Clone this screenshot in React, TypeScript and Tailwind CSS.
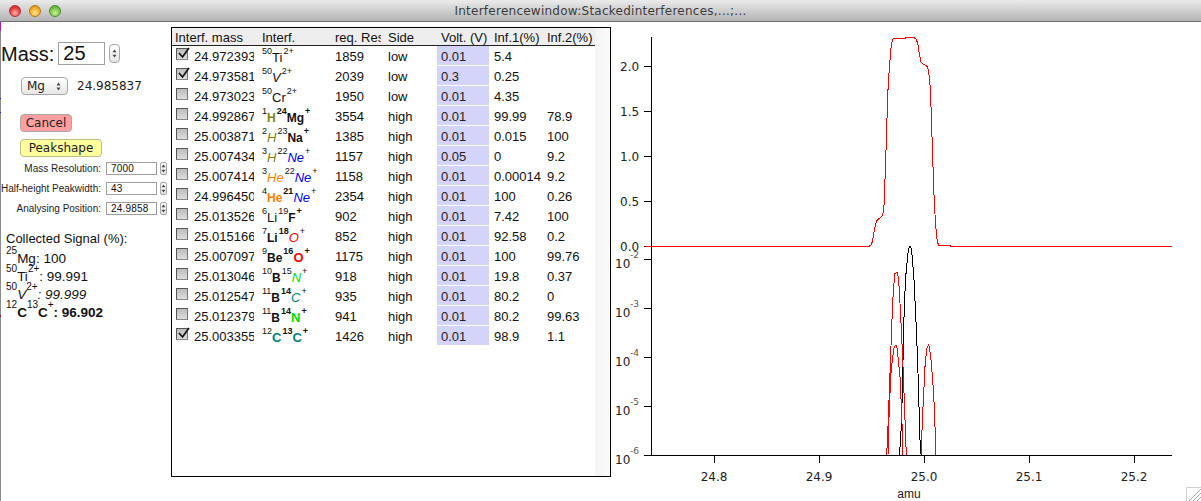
import type { ReactNode } from "react";

type Part = { m: string; e: string; mb?: boolean; cls?: string };
type Row = {
  on?: boolean;
  mass: string;
  parts: Part[];
  charge: string;
  cb?: boolean;
  res: string;
  side: string;
  volt: string;
  inf1: string;
  inf2?: string;
};

const OLIVE_B = "font-bold text-[#7f7f10]";
const OLIVE_I = "italic text-[13px] text-[#7f7f10]";
const ORANGE_I = "italic text-[13px] text-[#ff8000]";
const ORANGE_B = "font-bold text-[#ff8000]";
const BLUE_I = "italic text-[13px] text-[#0000ff]";
const RED_I = "italic text-[13px] text-[#ff0000]";
const RED_B = "font-bold text-[13px] text-[#ff0000]";
const GREEN_I = "italic text-[13px] text-[#00e000]";
const GREEN_B = "font-bold text-[13px] text-[#00e000]";
const TEAL_I = "italic text-[13px] text-[#008080]";
const TEAL_B = "font-bold text-[13px] text-[#008080]";
const PLAIN = "text-[13px]";

const rows: Row[] = [
  { on: true, mass: "24.972393", parts: [{ m: "50", e: "Ti", cls: PLAIN }], charge: "2+", res: "1859", side: "low", volt: "0.01", inf1: "5.4" },
  { on: true, mass: "24.973581", parts: [{ m: "50", e: "V", cls: "italic text-[13px]" }], charge: "2+", res: "2039", side: "low", volt: "0.3", inf1: "0.25" },
  { mass: "24.973023", parts: [{ m: "50", e: "Cr", cls: PLAIN }], charge: "2+", res: "1950", side: "low", volt: "0.01", inf1: "4.35" },
  { mass: "24.992867", parts: [{ m: "1", e: "H", cls: OLIVE_B }, { m: "24", mb: true, e: "Mg", cls: "font-bold" }], charge: "+", cb: true, res: "3554", side: "high", volt: "0.01", inf1: "99.99", inf2: "78.9" },
  { mass: "25.003871", parts: [{ m: "2", e: "H", cls: OLIVE_I }, { m: "23", e: "Na", cls: "font-bold" }], charge: "+", cb: true, res: "1385", side: "high", volt: "0.01", inf1: "0.015", inf2: "100" },
  { mass: "25.007434", parts: [{ m: "3", e: "H", cls: OLIVE_I }, { m: "22", e: "Ne", cls: BLUE_I }], charge: "+", res: "1157", side: "high", volt: "0.05", inf1: "0", inf2: "9.2" },
  { mass: "25.007414", parts: [{ m: "3", e: "He", cls: ORANGE_I }, { m: "22", e: "Ne", cls: BLUE_I }], charge: "+", res: "1158", side: "high", volt: "0.01", inf1: "0.00014", inf2: "9.2" },
  { mass: "24.996450", parts: [{ m: "4", e: "He", cls: ORANGE_B }, { m: "21", mb: true, e: "Ne", cls: BLUE_I }], charge: "+", res: "2354", side: "high", volt: "0.01", inf1: "100", inf2: "0.26" },
  { mass: "25.013526", parts: [{ m: "6", e: "Li", cls: PLAIN }, { m: "19", e: "F", cls: "font-bold" }], charge: "+", cb: true, res: "902", side: "high", volt: "0.01", inf1: "7.42", inf2: "100" },
  { mass: "25.015166", parts: [{ m: "7", e: "Li", cls: "font-bold" }, { m: "18", mb: true, e: "O", cls: RED_I }], charge: "+", res: "852", side: "high", volt: "0.01", inf1: "92.58", inf2: "0.2" },
  { mass: "25.007097", parts: [{ m: "9", e: "Be", cls: "font-bold" }, { m: "16", mb: true, e: "O", cls: RED_B }], charge: "+", cb: true, res: "1175", side: "high", volt: "0.01", inf1: "100", inf2: "99.76" },
  { mass: "25.013046", parts: [{ m: "10", e: "B", cls: "font-bold" }, { m: "15", e: "N", cls: GREEN_I }], charge: "+", res: "918", side: "high", volt: "0.01", inf1: "19.8", inf2: "0.37" },
  { mass: "25.012547", parts: [{ m: "11", e: "B", cls: "font-bold" }, { m: "14", mb: true, e: "C", cls: TEAL_I }], charge: "+", res: "935", side: "high", volt: "0.01", inf1: "80.2", inf2: "0" },
  { mass: "25.012379", parts: [{ m: "11", e: "B", cls: "font-bold" }, { m: "14", mb: true, e: "N", cls: GREEN_B }], charge: "+", cb: true, res: "941", side: "high", volt: "0.01", inf1: "80.2", inf2: "99.63" },
  { on: true, mass: "25.003355", parts: [{ m: "12", e: "C", cls: TEAL_B }, { m: "13", mb: true, e: "C", cls: TEAL_B }], charge: "+", cb: true, res: "1426", side: "high", volt: "0.01", inf1: "98.9", inf2: "1.1" },
];

const Stepper = ({ big }: { big?: boolean }) => (
  <div
    className={
      big
        ? "w-[11px] h-[19px] rounded-[4px] border border-[#a8a8a8] bg-linear-to-b from-white to-[#e4e4e4] flex items-center justify-center"
        : "w-[7px] h-[13px] rounded-[2px] border border-[#a8a8a8] bg-linear-to-b from-white to-[#e4e4e4] flex items-center justify-center"
    }
  >
    <svg width="5" height="11" viewBox="0 0 5 11" fill="#444">
      <path d="M2.5 1.5 L4.5 4.2 H0.5 Z" />
      <path d="M2.5 9.5 L4.5 6.8 H0.5 Z" />
    </svg>
  </div>
);

const NumField = ({ label, value }: { label: string; value: string }) => (
  <div className="h-[20px] flex items-center">
    <div className="w-[101px] text-right text-[10px] text-[#222]">{label}</div>
    <div className="ml-[5px] w-[51px] h-[13px] border border-[#a0a0a0] pl-[4px] text-[10px] leading-[11px] tracking-[0.2px] text-[#111]">
      {value}
    </div>
    <div className="ml-[3px]">
      <Stepper />
    </div>
  </div>
);

const Check = ({ on }: { on?: boolean }) => (
  <div className="relative w-[12px] h-[12px] border border-[#555] border-b-[#888] border-r-[#777] bg-linear-to-b from-[#bcbcbc] to-[#dedede]">
    {on && (
      <svg className="absolute -top-[3px] left-0" width="14" height="14" viewBox="0 0 14 14" fill="none">
        <path d="M2 7 L5.5 11 L12 2" stroke="#111" strokeWidth="1.7" />
      </svg>
    )}
  </div>
);

const Formula = ({ row }: { row: Row }) => (
  <div className="flex items-start h-[19px] overflow-visible text-[#111]">
    {row.parts.map((p, idx) => (
      <div key={idx} className={idx > 0 ? "flex items-start ml-[1px]" : "flex items-start"}>
        <span className={p.mb ? "text-[9px] leading-[10px] font-bold" : "text-[9px] leading-[10px]"}>{p.m}</span>
        <span className={"text-[12px] leading-[12px] mt-[6px] " + (p.cls || "")}>{p.e}</span>
      </div>
    ))}
    <span className={row.cb ? "text-[9px] leading-[10px] ml-[1px] font-bold" : "text-[9px] leading-[10px] ml-[1px]"}>{row.charge}</span>
  </div>
);

const SignalLine = ({ children }: { children: ReactNode }) => (
  <div className="flex items-start h-[18px] text-[13px] leading-[15px] text-[#111]">{children}</div>
);

const M = ({ v }: { v: string }) => <span className="text-[10px] leading-[9px] font-normal not-italic -mt-[2px]">{v}</span>;

const Sig = ({ children, cls }: { children: ReactNode; cls?: string }) => (
  <span className={"text-[13.5px] leading-[15px] mt-[3px] whitespace-pre " + (cls || "")}>{children}</span>
);

// points read off the reference, in 3x crop pixels
const toPoints = (pts: number[][], ox: number, oy: number) =>
  pts.map(([x, y]) => `${(ox + x / 3).toFixed(1)},${(oy + y / 3).toFixed(1)}`).join(" ");

const topCurve = [
  [-642, 649], [28, 649], [33, 645], [37, 635], [41, 612], [45, 590], [50, 572], [58, 565], [65, 560], [69, 550],
  [72, 525], [74, 485], [76, 415], [79, 335], [82, 235], [85, 155], [90, 90], [94, 45], [98, 27], [104, 25],
  [135, 25], [140, 22], [160, 22], [168, 27], [173, 40], [178, 70], [183, 95], [190, 103], [200, 107], [205, 120],
  [208, 140], [211, 175], [213, 230], [216, 320], [219, 410], [222, 495], [226, 570], [229, 610], [232, 635],
  [236, 646], [270, 647], [274, 650], [936, 650],
];
const blackPeak = [
  [118, 645], [122, 600], [125, 520], [128, 420], [130, 310], [133, 200], [137, 110], [141, 70], [145, 30], [148, 20],
  [152, 20], [155, 35], [158, 70], [162, 120], [166, 200], [170, 290], [174, 400], [178, 530], [181, 630], [184, 645],
];
const redA = [
  [80, 645], [85, 540], [90, 400], [95, 260], [100, 150], [105, 100], [112, 97], [116, 120], [120, 190], [125, 290],
  [130, 400], [135, 540], [139, 645],
];
const redB = [
  [84, 645], [88, 500], [93, 400], [98, 350], [103, 320], [110, 315], [114, 350], [120, 410], [125, 520], [129, 645],
];
const redC = [
  [183, 645], [188, 520], [195, 380], [200, 325], [206, 313], [212, 350], [218, 420], [224, 520], [227, 645],
];

const Chart = () => {
  const sans = { fontFamily: "'DejaVu Sans', sans-serif" };
  return (
    <svg className="flex-1 h-full block" viewBox="611 22 590 479">
      <g stroke="#000" strokeWidth="1" shapeRendering="crispEdges">
        <line x1="651.5" y1="37" x2="651.5" y2="455" />
        <line x1="644" y1="455.5" x2="1172" y2="455.5" />
        {[66, 111, 156, 201, 246, 259, 308, 357, 406].map((y) => (
          <line key={y} x1="644" y1={y + 0.5} x2="651" y2={y + 0.5} />
        ))}
        {[714, 819, 924, 1029, 1134].map((x) => (
          <line key={x} x1={x + 0.5} y1="455" x2={x + 0.5} y2="463" />
        ))}
      </g>
      <g fill="#222" fontSize="12" style={sans}>
        {[["2.0", 66], ["1.5", 111], ["1.0", 156], ["0.5", 201], ["0.0", 246]].map(([t, y]) => (
          <text key={t} x="620" y={(y as number) + 4.5}>{t}</text>
        ))}
        {[["-2", 263], ["-3", 312], ["-4", 361], ["-5", 410], ["-6", 459]].map(([t, y]) => (
          <g key={t}>
            <text x="615" y={(y as number) + 4.5}>10</text>
            <text x="630" y={(y as number) - 5} fontSize="9" fill="#555">{t}</text>
          </g>
        ))}
        {[["24.8", 714], ["24.9", 819], ["25.0", 924], ["25.1", 1029], ["25.2", 1134]].map(([t, x]) => (
          <text key={t} x={x} y="481" textAnchor="middle">{t}</text>
        ))}
      </g>
      <text x="909" y="498" textAnchor="middle" fontSize="12" fill="#222" style={{ fontFamily: "'Liberation Sans', sans-serif" }}>
        amu
      </text>
      <g fill="none" strokeWidth="1" shapeRendering="crispEdges">
        <polyline points={toPoints(blackPeak, 860, 240)} stroke="#000" />
        <polyline points={toPoints(redA, 860, 240)} stroke="#ff0000" />
        <polyline points={toPoints(redB, 860, 240)} stroke="#ff0000" />
        <polyline points={toPoints(redC, 860, 240)} stroke="#ff0000" />
        <polyline points={toPoints(topCurve, 860, 30)} stroke="#ff0000" />
      </g>
    </svg>
  );
};

const App = () => {
  return (
    <div className="relative w-[1201px] h-[501px] overflow-hidden bg-white flex flex-col font-['Liberation_Sans',Arial,sans-serif]">
      {/* title bar */}
      <div className="relative h-[22px] shrink-0 bg-linear-to-b from-[#ebebeb] to-[#b4b4b4] border-b border-[#6e6e6e] flex items-center justify-center">
        <div className="absolute left-[9px] top-[5px] flex gap-[8px]">
          <div className="w-[12px] h-[12px] rounded-full border border-[#a33] bg-[radial-gradient(circle_at_50%_70%,#ffb0a8,#e23c3c_60%,#b52525)]" />
          <div className="w-[12px] h-[12px] rounded-full border border-[#b07a1c] bg-[radial-gradient(circle_at_50%_70%,#ffe38a,#f0a92c_60%,#c48416)]" />
          <div className="w-[12px] h-[12px] rounded-full border border-[#4f8a2d] bg-[radial-gradient(circle_at_50%_70%,#c8f29a,#75c246_60%,#4d9a2a)]" />
        </div>
        <span className="text-[12px] text-[#3c3c3c] font-['DejaVu_Sans',sans-serif] tracking-[0.25px]">
          Interferencewindow:Stackedinterferences,...;...
        </span>
      </div>

      <div className="flex flex-1 min-h-0">
        {/* left panel */}
        <div className="relative w-[172px] shrink-0 border-l-2 border-[#8c8c8c] -ml-[1px]">
          <div className="absolute -left-[2px] top-[0px] w-[2px] h-[9px] bg-[#a020a0]" />
          <div className="absolute -left-[2px] top-[76px] w-[2px] h-[1px] bg-[#2020c0]" />
          <div className="absolute -left-[2px] top-[90px] w-[2px] h-[1px] bg-[#2020c0]" />
          <div className="absolute -left-[2px] top-[293px] w-[2px] h-[2px] bg-[#a02020]" />

          <div className="flex items-center mt-[20px] h-[23px]">
            <span className="text-[20px] text-[#111]">Mass:</span>
            <div className="ml-[4px] w-[47px] h-[23px] border border-[#a0a0a0] pl-[4px] text-[20px] leading-[21px] text-[#111]">25</div>
            <div className="ml-[4px]">
              <Stepper big />
            </div>
          </div>

          <div className="flex items-center mt-[12px] pl-[20px] font-['DejaVu_Sans',sans-serif] text-[12px] text-[#222]">
            <div className="w-[47px] h-[18px] rounded-[4px] border border-[#a8a8a8] bg-linear-to-b from-white to-[#e6e6e6] flex items-center justify-between pl-[5px] pr-[6px]">
              <span>Mg</span>
              <svg width="5" height="9" viewBox="0 0 5 9" fill="#444">
                <path d="M2.5 0.5 L4.5 3.4 H0.5 Z" />
                <path d="M2.5 8.5 L4.5 5.6 H0.5 Z" />
              </svg>
            </div>
            <span className="ml-[9px]">24.985837</span>
          </div>

          <div className="flex flex-col items-start gap-[7px] mt-[19px] ml-[19px] font-['DejaVu_Sans',sans-serif] text-[12px] text-[#222]">
            <button className="w-[52px] h-[18px] rounded-[4px] border border-[#a8a8a8] bg-[#ff9f9f] leading-[15px]">Cancel</button>
            <button className="w-[82px] h-[18px] rounded-[4px] border border-[#bdbd88] bg-[#ffff9e] leading-[15px]">Peakshape</button>
          </div>

          <div className="mt-[1px] -ml-[1px]">
            <NumField label="Mass Resolution:" value="7000" />
            <NumField label="Half-height Peakwidth:" value="43" />
            <NumField label="Analysing Position:" value="24.9858" />
          </div>

          <div className="mt-[12px] ml-[5px]">
            <div className="h-[18px] text-[13px] leading-[18px] text-[#111]">Collected Signal (%):</div>
            <SignalLine>
              <M v="25" />
              <Sig>Mg: 100</Sig>
            </SignalLine>
            <SignalLine>
              <M v="50" />
              <Sig>Ti</Sig>
              <M v="2+" />
              <Sig>: 99.991</Sig>
            </SignalLine>
            <SignalLine>
              <M v="50" />
              <Sig cls="italic">V</Sig>
              <M v="2+" />
              <Sig cls="italic">: 99.999</Sig>
            </SignalLine>
            <SignalLine>
              <M v="12" />
              <Sig cls="font-bold">C</Sig>
              <M v="13" />
              <Sig cls="font-bold">C</Sig>
              <M v="+" />
              <Sig cls="font-bold">: 96.902</Sig>
            </SignalLine>
          </div>
        </div>

        {/* table */}
        <div className="w-[440px] h-[450px] mt-[5px] shrink-0 border border-black flex text-[13px] text-[#111]">
          <div className="w-[423px] shrink-0">
            <div className="h-[18px] bg-[#eeeeee] border-b border-[#222] flex leading-[18px] pt-[1px]">
              <div className="w-[89px] pl-[3px] whitespace-nowrap">Interf. mass</div>
              <div className="w-[73px] pl-[1px]">Interf.</div>
              <div className="w-[53px] pl-[1px]">
                <div className="w-[46px] overflow-hidden whitespace-nowrap">req. Res</div>
              </div>
              <div className="w-[50px] pl-[1px]">Side</div>
              <div className="w-[56px] pl-[4px] whitespace-nowrap">Volt. (V)</div>
              <div className="w-[53px] pl-[1px] whitespace-nowrap">Inf.1(%)</div>
              <div className="w-[49px] pl-[1px] whitespace-nowrap">Inf.2(%)</div>
            </div>
            {rows.map((row, idx) => (
              <div key={idx} className="h-[20px] flex leading-[21px]">
                <div className="w-[89px] flex">
                  <div className="w-[22px] pl-[4px] pt-[2px]">
                    <Check on={row.on} />
                  </div>
                  <div className="w-[60px] overflow-hidden whitespace-nowrap">{row.mass}</div>
                </div>
                <div className="w-[73px] pl-[1px]">
                  <Formula row={row} />
                </div>
                <div className="w-[53px] pl-[1px]">{row.res}</div>
                <div className="w-[50px] pl-[1px]">{row.side}</div>
                <div className="w-[56px]">
                  <div className="w-[52px] h-[19px] bg-[#d4d4fb] pl-[4px] text-[#222]">{row.volt}</div>
                </div>
                <div className="w-[53px] pl-[1px]">{row.inf1}</div>
                <div className="w-[49px] pl-[1px]">{row.inf2}</div>
              </div>
            ))}
          </div>
          <div className="flex-1 bg-linear-to-r from-[#f4f4f4] to-[#fbfbfb]" />
        </div>

        <Chart />
      </div>

      {/* resize grip */}
      <svg className="absolute right-0 bottom-0" width="15" height="14" viewBox="0 0 15 14" fill="none">
        <path d="M0.5 14 V0.5 H15" stroke="#d0d0d0" />
        <path d="M3 14 L15 2 M7 14 L15 6 M11 14 L15 10" stroke="#a8a8a8" />
      </svg>
    </div>
  );
};

export default App;
